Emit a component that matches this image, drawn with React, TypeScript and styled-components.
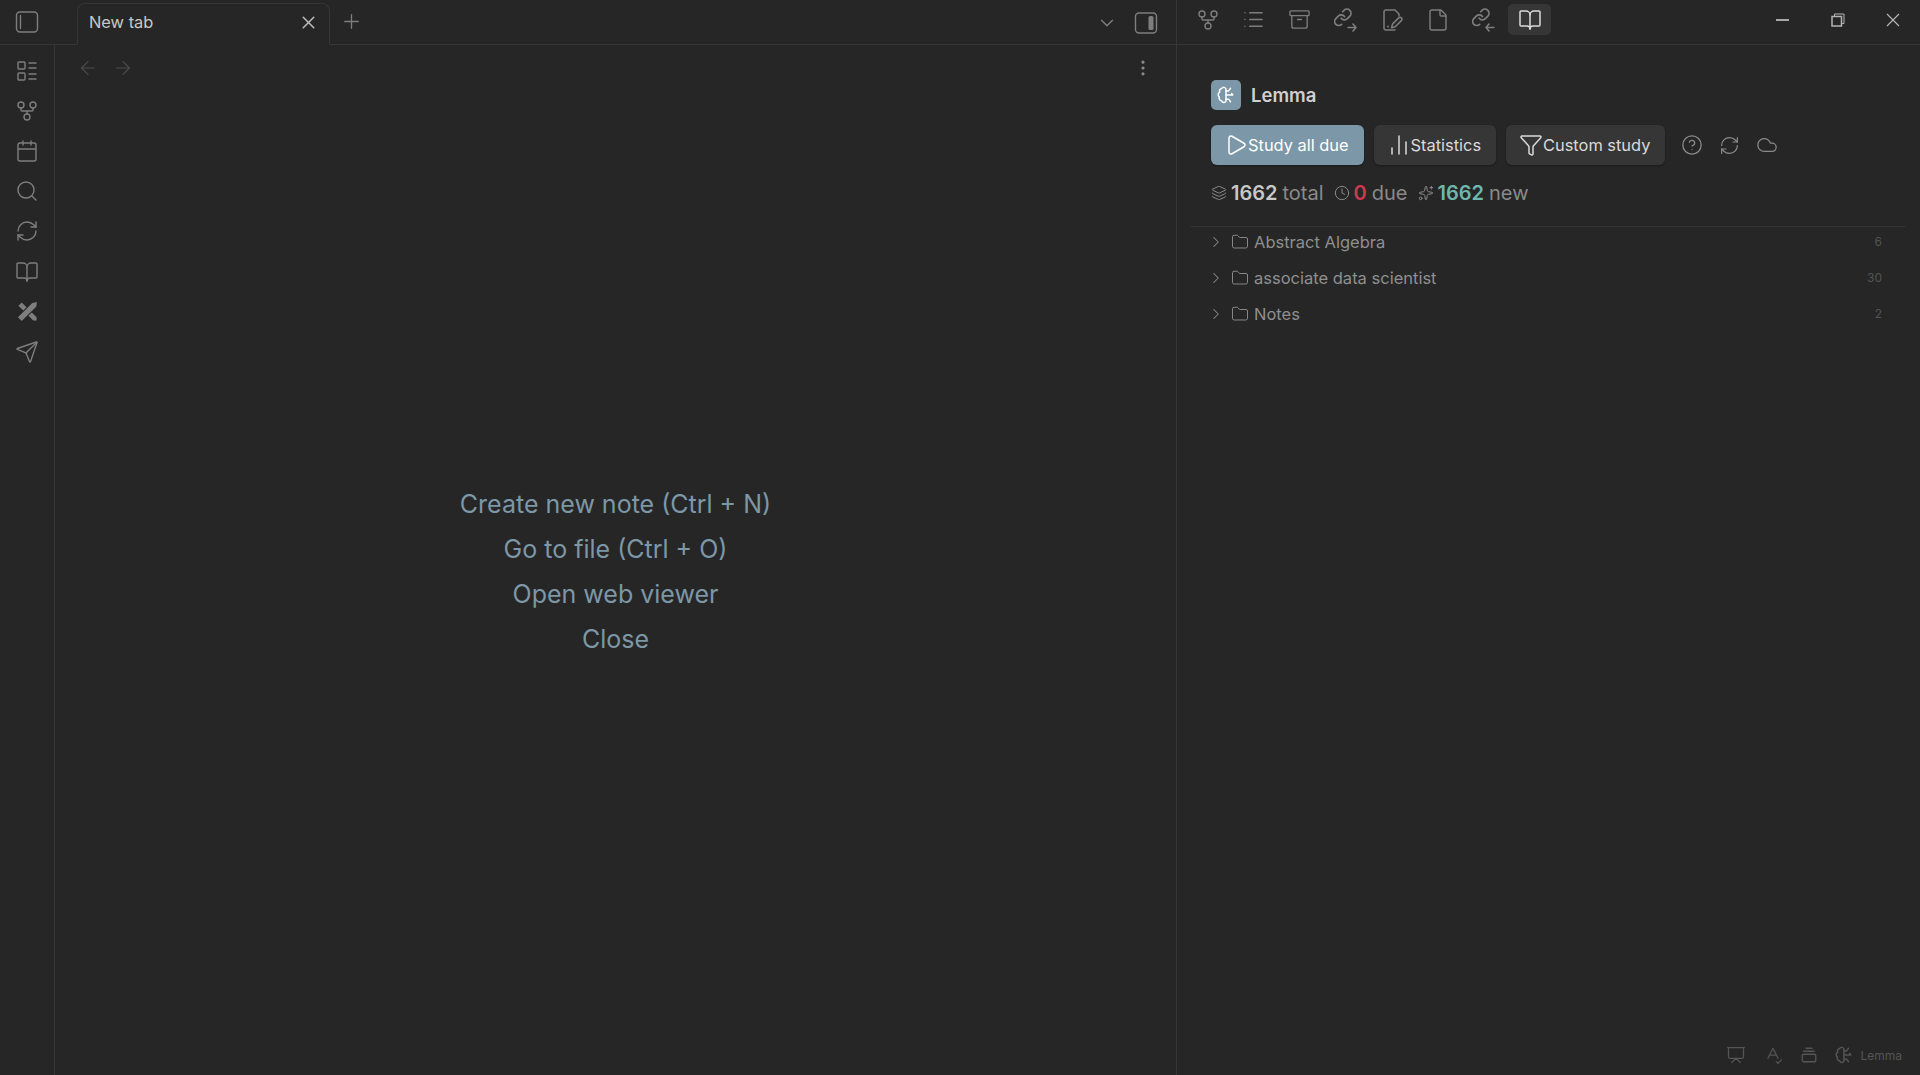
import React from "react";
import styled, { createGlobalStyle } from "styled-components";
import {
  Archive,
  BookOpen,
  Calendar,
  ChartNoAxesColumn,
  ChevronDown,
  ChevronRight,
  CircleHelp,
  Clock,
  Cloud,
  File,
  Folder,
  Funnel,
  GitFork,
  Layers,
  LayoutList,
  List,
  MoreVertical,
  Play,
  Plus,
  Presentation,
  RefreshCw,
  Search,
  Send,
  Sparkles,
  SpellCheck,
  X,
  ArrowLeft,
  ArrowRight,
} from "lucide-react";

const GlobalStyle = createGlobalStyle`
  html, body {
    margin: 0;
    height: 100%;
    background: #262626;
    overflow: hidden;
  }
  body {
    font-family: Inter, "Liberation Sans", sans-serif;
    color: #dadada;
  }
  * {
    box-sizing: border-box;
  }
`;

const BrainIcon = ({ size = 18 }: { size?: number }) => (
  <svg width={size} height={size} viewBox="0 0 24 24" fill="none" stroke="currentColor" strokeWidth="2" strokeLinecap="round" strokeLinejoin="round">
    <path d="M12 4.500a3 3 0 0 0-5.600-1.200A3.500 3.500 0 0 0 3.600 8 4 4 0 0 0 3 14.500a3.800 3.800 0 0 0 3 5 3.200 3.200 0 0 0 6 .5z" />
    <path d="M12 12h9M12 6.500h3.500M12 17.500h3.500M15.500 6.500 18 3M15.500 17.500 18 21M21 12l-1.500-2" />
  </svg>
);

const LinkArrowIcon = ({ incoming }: { incoming?: boolean }) => (
  <svg width="24" height="24" viewBox="0 0 24 24" fill="none" stroke="currentColor" strokeWidth="1.600" strokeLinecap="round" strokeLinejoin="round">
    <g transform="translate(-1 -0.500) scale(0.820)" strokeWidth="2.100">
      <path d="M10 13a5 5 0 0 0 7.540.54l3-3a5 5 0 0 0-7.070-7.070l-1.720 1.710" />
      <path d="M14 11a5 5 0 0 0-7.540-.54l-3 3a5 5 0 0 0 7.070 7.070" />
    </g>
    {incoming ? <path d="M22 19.500h-8M17 16l-3 3.500 3 3.500" /> : <path d="M14 19.500h8M19 16l3 3.500-3 3.500" />}
  </svg>
);

const NoteEditIcon = () => (
  <svg width="24" height="24" viewBox="0 0 24 24" fill="none" stroke="currentColor" strokeWidth="1.500" strokeLinecap="round" strokeLinejoin="round">
    <path d="M15 22H6a2 2 0 0 1-2-2V4a2 2 0 0 1 2-2h9l4 4v2" />
    <path d="M21.400 12.600a1.900 1.900 0 0 0-2.700-2.700l-6.200 6.200-1 3.700 3.700-1z" />
    <path d="M8 18.500h.01" strokeWidth="2" />
  </svg>
);

const PencilCrossIcon = () => (
  <svg width="23" height="23" viewBox="0 0 24 24" fill="currentColor">
    <path d="M2.500 6 6 2.500l15.500 15.500V21.500H18z" />
    <path d="M2 18 17 3l5-1-1 5L6 22z" stroke="#262626" strokeWidth="2" strokeLinejoin="round" />
    <path d="M2 18 17 3l5-1-1 5L6 22z" />
    <path d="M18 6h.01" stroke="#262626" strokeWidth="1.500" />
  </svg>
);

const SidebarLeftIcon = () => (
  <svg width="24" height="24" viewBox="0 0 24 24" fill="none" stroke="currentColor" strokeWidth="1.400">
    <rect x="1.500" y="2" width="21" height="20" rx="3.500" />
    <path d="M5.500 5.500v13" strokeLinecap="round" />
  </svg>
);

const SidebarRightIcon = () => (
  <svg width="24" height="24" viewBox="0 0 24 24" fill="none" stroke="currentColor" strokeWidth="1.400">
    <rect x="1.500" y="2" width="21" height="20" rx="3.500" />
    <rect x="14.500" y="5" width="5" height="14" rx="1.500" fill="currentColor" stroke="none" />
  </svg>
);

const StackIcon = () => (
  <svg width="18" height="18" viewBox="0 0 24 24" fill="none" stroke="currentColor" strokeWidth="1.800" strokeLinecap="round" strokeLinejoin="round">
    <path d="M8 3h8" />
    <rect x="3" y="11" width="18" height="10" rx="2" />
    <path d="M5 7h14" />
  </svg>
);

const RestoreIcon = () => (
  <svg width="14" height="14" viewBox="0 0 14 14" fill="none" stroke="currentColor">
    <rect x="1" y="3.500" width="9.500" height="9.500" strokeWidth="1.500" />
    <path d="M3.500 3V1h9.500v9.500h-2" strokeWidth="1" />
  </svg>
);

const CloseThin = () => (
  <svg width="14" height="14" viewBox="0 0 14 14" stroke="currentColor" strokeWidth="1.200">
    <path d="M1 1l12 12M13 1 1 13" />
  </svg>
);

const App = () => {
  return (
    <>
      <GlobalStyle />
      <Shell>
        <LeftPart>
          <LeftHeader>
            <RailCorner>
              <SidebarLeftIcon />
            </RailCorner>
            <Tab>
              <TabTitle>New tab</TabTitle>
              <X size={21} strokeWidth={1.700} color="#bdbdbd" />
            </Tab>
            <NewTab>
              <Plus size={23} strokeWidth={1.400} />
            </NewTab>
            <HeaderRight>
              <ChevronDown size={22} strokeWidth={1.500} />
              <SidebarRightIcon />
            </HeaderRight>
          </LeftHeader>
          <LeftBody>
            <Rail>
              <RailIcon><LayoutList size={24} strokeWidth={1.400} /></RailIcon>
              <RailIcon><GitFork size={24} strokeWidth={1.400} /></RailIcon>
              <RailIcon><Calendar size={24} strokeWidth={1.400} /></RailIcon>
              <RailIcon><Search size={24} strokeWidth={1.400} /></RailIcon>
              <RailIcon><RefreshCw size={24} strokeWidth={1.400} /></RailIcon>
              <RailIcon><BookOpen size={24} strokeWidth={1.400} /></RailIcon>
              <RailIcon><PencilCrossIcon /></RailIcon>
              <RailIcon><Send size={24} strokeWidth={1.400} /></RailIcon>
            </Rail>
            <Main>
              <ViewHeader>
                <NavArrows>
                  <ArrowLeft size={22} strokeWidth={1.300} />
                  <ArrowRight size={22} strokeWidth={1.300} />
                </NavArrows>
                <MoreVertical size={20} strokeWidth={1.800} color="#8a8a8a" />
              </ViewHeader>
              <EmptyState>
                <EmptyAction>Create new note (Ctrl + N)</EmptyAction>
                <EmptyAction>Go to file (Ctrl + O)</EmptyAction>
                <EmptyAction>Open web viewer</EmptyAction>
                <EmptyAction>Close</EmptyAction>
              </EmptyState>
            </Main>
          </LeftBody>
        </LeftPart>

        <RightPart>
          <RightHeader>
            <PaneTabs>
              <PaneTab><GitFork size={24} strokeWidth={1.400} /></PaneTab>
              <PaneTab><List size={23} strokeWidth={1.400} /></PaneTab>
              <PaneTab><Archive size={23} strokeWidth={1.400} /></PaneTab>
              <PaneTab><LinkArrowIcon /></PaneTab>
              <PaneTab><NoteEditIcon /></PaneTab>
              <PaneTab><File size={24} strokeWidth={1.400} /></PaneTab>
              <PaneTab><LinkArrowIcon incoming /></PaneTab>
              <PaneTab $active><BookOpen size={24} strokeWidth={1.500} /></PaneTab>
            </PaneTabs>
            <WindowControls>
              <WindowButton><Minimize /></WindowButton>
              <WindowButton><RestoreIcon /></WindowButton>
              <WindowButton><CloseThin /></WindowButton>
            </WindowControls>
          </RightHeader>

          <Panel>
            <TitleRow>
              <Logo><BrainIcon /></Logo>
              <Title>Lemma</Title>
            </TitleRow>
            <ButtonRow>
              <ActionButton $primary><Play size={24} strokeWidth={1.500} />Study all due</ActionButton>
              <ActionButton><ChartNoAxesColumn size={24} strokeWidth={1.500} />Statistics</ActionButton>
              <ActionButton><Funnel size={24} strokeWidth={1.500} />Custom study</ActionButton>
              <GhostIcons>
                <CircleHelp size={22} strokeWidth={1.400} />
                <RefreshCw size={21} strokeWidth={1.400} />
                <Cloud size={22} strokeWidth={1.400} />
              </GhostIcons>
            </ButtonRow>
            <StatsRow>
              <Stat>
                <Layers size={16} strokeWidth={1.500} />
                <Num>1662</Num> total
              </Stat>
              <Stat>
                <Clock size={16} strokeWidth={1.500} />
                <Num $color="#d0384f">0</Num> due
              </Stat>
              <Stat>
                <Sparkles size={16} strokeWidth={1.500} />
                <Num $color="#6fb7ae">1662</Num> new
              </Stat>
            </StatsRow>
          </Panel>

          <Divider />

          <Tree>
            <TreeRow>
              <ChevronRight size={18} strokeWidth={1.400} />
              <FolderIcon size={18} strokeWidth={1.300} />
              <TreeName>Abstract Algebra</TreeName>
              <Count>6</Count>
            </TreeRow>
            <TreeRow>
              <ChevronRight size={18} strokeWidth={1.400} />
              <FolderIcon size={18} strokeWidth={1.300} />
              <TreeName>associate data scientist</TreeName>
              <Count>30</Count>
            </TreeRow>
            <TreeRow>
              <ChevronRight size={18} strokeWidth={1.400} />
              <FolderIcon size={18} strokeWidth={1.300} />
              <TreeName>Notes</TreeName>
              <Count>2</Count>
            </TreeRow>
          </Tree>

          <StatusBar>
            <Presentation size={20} strokeWidth={1.500} />
            <SpellCheck size={20} strokeWidth={1.500} />
            <StackIcon />
            <StatusPlugin>
              <BrainIcon size={18} />
              Lemma
            </StatusPlugin>
          </StatusBar>
        </RightPart>
      </Shell>
    </>
  );
};

export default App;

const Shell = styled.div`
  display: flex;
  width: 1920px;
  height: 1075px;
  background: #262626;
  overflow: hidden;
`;

const LeftPart = styled.div`
  display: flex;
  flex-direction: column;
  width: 1177px;
  border-right: 1px solid #363636;
`;

const LeftHeader = styled.div`
  display: flex;
  align-items: flex-end;
  height: 45px;
  border-bottom: 1px solid #363636;
  flex-shrink: 0;
`;

const RailCorner = styled.div`
  display: flex;
  align-items: center;
  justify-content: center;
  width: 54px;
  height: 44px;
  margin-right: 23px;
  color: #7e7e7e;
`;

const Tab = styled.div`
  display: flex;
  align-items: center;
  justify-content: space-between;
  width: 253px;
  height: 42px;
  margin-bottom: -1px;
  padding: 0 10px 3px 11px;
  background: #262626;
  border: 1px solid #363636;
  border-bottom: 1px solid #262626;
  border-radius: 8px 8px 0 0;
`;

const TabTitle = styled.span`
  margin-top: -2px;
  font-size: 16.400px;
  color: #c8c8c8;
`;

const NewTab = styled.div`
  display: flex;
  align-items: center;
  justify-content: center;
  width: 28px;
  height: 43px;
  margin-left: 7px;
  padding-bottom: 3px;
  color: #7e7e7e;
`;

const HeaderRight = styled.div`
  display: flex;
  align-items: center;
  gap: 16px;
  height: 43px;
  margin-left: auto;
  padding-right: 18px;
  color: #7e7e7e;
`;

const LeftBody = styled.div`
  display: flex;
  flex: 1;
  min-height: 0;
`;

const Rail = styled.div`
  display: flex;
  flex-direction: column;
  width: 55px;
  padding-top: 6px;
  border-right: 1px solid #363636;
  flex-shrink: 0;
`;

const RailIcon = styled.div`
  display: flex;
  align-items: center;
  justify-content: center;
  height: 40.100px;
  color: #7e7e7e;
`;

const Main = styled.div`
  display: flex;
  flex-direction: column;
  flex: 1;
  min-width: 0;
`;

const ViewHeader = styled.div`
  display: flex;
  align-items: center;
  justify-content: space-between;
  height: 46px;
  padding: 0 23px 0 22px;
`;

const NavArrows = styled.div`
  display: flex;
  gap: 13px;
  color: #4c4c4c;
`;

const EmptyState = styled.div`
  display: flex;
  flex-direction: column;
  align-items: center;
  padding-top: 391px;
`;

const EmptyAction = styled.div`
  height: 45px;
  line-height: 45px;
  font-size: 25px;
  color: #7d97a6;
`;

const RightPart = styled.div`
  display: flex;
  flex-direction: column;
  flex: 1;
  min-width: 0;
`;

const RightHeader = styled.div`
  display: flex;
  align-items: flex-start;
  justify-content: space-between;
  height: 45px;
  padding: 4px 0 0 9px;
  border-bottom: 1px solid #363636;
  flex-shrink: 0;
`;

const PaneTabs = styled.div`
  display: flex;
  gap: 3px;
`;

const PaneTab = styled.div<{ $active?: boolean }>`
  display: flex;
  align-items: center;
  justify-content: center;
  width: 43px;
  height: 31px;
  border-radius: 5px;
  color: ${(p) => (p.$active ? "#dadada" : "#7e7e7e")};
  background: ${(p) => (p.$active ? "#363636" : "transparent")};
`;

const WindowControls = styled.div`
  display: flex;
  margin-top: -4px;
`;

const WindowButton = styled.div`
  display: flex;
  align-items: center;
  justify-content: center;
  width: 55px;
  height: 39px;
  color: #b4b4b4;
`;

const Minimize = styled.div`
  width: 13px;
  height: 2px;
  background: #a8a8a8;
`;

const Panel = styled.div`
  padding: 35px 0 0 34px;
`;

const TitleRow = styled.div`
  display: flex;
  align-items: center;
  gap: 10px;
`;

const Logo = styled.div`
  display: flex;
  align-items: center;
  justify-content: center;
  width: 30px;
  height: 30px;
  border-radius: 5px;
  background: #7b97a8;
  color: #ffffff;
`;

const Title = styled.div`
  margin-top: -1px;
  font-size: 18.500px;
  font-weight: 600;
  color: #d0d0d0;
`;

const ButtonRow = styled.div`
  display: flex;
  align-items: center;
  gap: 10px;
  margin-top: 15px;
`;

const ActionButton = styled.div<{ $primary?: boolean }>`
  display: flex;
  align-items: center;
  justify-content: center;
  height: 40px;
  padding: 0 15px 0 13px;
  border-radius: 6px;
  font-size: 16.400px;
  color: ${(p) => (p.$primary ? "#ffffff" : "#dadada")};
  background: ${(p) => (p.$primary ? "#7b97a8" : "#363636")};
  box-shadow: 0 1px 2px rgba(0, 0, 0, 0.35);
`;

const GhostIcons = styled.div`
  display: flex;
  align-items: center;
  gap: 16px;
  margin-left: 6px;
  color: #8a8a8a;
`;

const StatsRow = styled.div`
  display: flex;
  align-items: center;
  gap: 10px;
  height: 24px;
  margin-top: 16px;
  font-size: 20px;
  color: #8a8a8a;
`;

const Stat = styled.div`
  display: flex;
  align-items: center;
  gap: 5px;
`;

const Num = styled.span<{ $color?: string }>`
  margin-left: -1px;
  font-weight: 600;
  color: ${(p) => p.$color || "#c8c8c8"};
`;

const Divider = styled.div`
  height: 1px;
  margin: 21px 15px 0 14px;
  background: #363636;
`;

const Tree = styled.div`
  display: flex;
  flex-direction: column;
  padding: 0 38px 0 30px;
`;

const TreeRow = styled.div`
  display: flex;
  align-items: center;
  height: 36px;
  padding-bottom: 7px;
  color: #8a8a8a;
`;

const FolderIcon = styled(Folder)`
  margin-left: 6px;
`;

const TreeName = styled.span`
  margin-left: 5px;
  font-size: 16.500px;
  color: #8f8f8f;
`;

const Count = styled.span`
  margin-left: auto;
  margin-top: -1px;
  font-size: 12px;
  color: #545454;
`;

const StatusBar = styled.div`
  display: flex;
  align-items: center;
  justify-content: flex-end;
  gap: 17px;
  height: 40px;
  margin-top: auto;
  padding-right: 18px;
  color: #555555;
`;

const StatusPlugin = styled.div`
  display: flex;
  align-items: center;
  gap: 7px;
  font-size: 12px;
`;
